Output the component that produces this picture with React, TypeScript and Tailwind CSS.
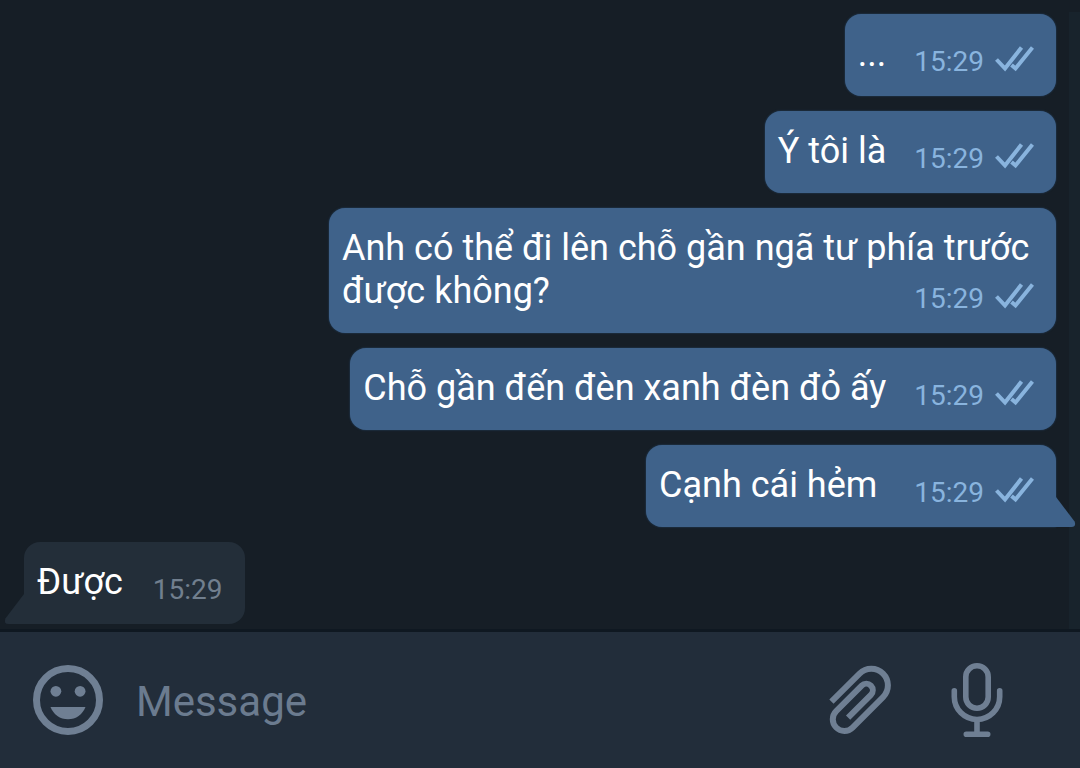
type Message = {
  id: number
  text: string
  time: string
  outgoing: boolean
  tail?: boolean
}

const messages: Message[] = [
  { id: 1, text: "...", time: "15:29", outgoing: true },
  { id: 2, text: "Ý tôi là", time: "15:29", outgoing: true },
  { id: 3, text: "Anh có thể đi lên chỗ gần ngã tư phía trước được không?", time: "15:29", outgoing: true },
  { id: 4, text: "Chỗ gần đến đèn xanh đèn đỏ ấy", time: "15:29", outgoing: true },
  { id: 5, text: "Cạnh cái hẻm\u00a0", time: "15:29", outgoing: true, tail: true },
  { id: 6, text: "Được", time: "15:29", outgoing: false, tail: true },
]

function ReadMark() {
  return (
    <svg className="mt-px h-[26px] w-[39px]" viewBox="0 0 39 26" fill="none" stroke="currentColor" strokeWidth="4" role="img" aria-label="Read">
      <path d="M1.5 13.5 10 22.5 26.5 1.5" />
      <path d="M16.5 19 20.5 22.5 37.5 1.5" />
    </svg>
  )
}

function Tail({ outgoing }: { outgoing: boolean }) {
  return (
    <svg
      className={`absolute bottom-0 h-[30px] w-5 ${outgoing ? "left-full text-[#3f628a]" : "right-full -scale-x-100 text-[#232e39]"}`}
      viewBox="0 0 20 30"
      fill="currentColor"
      overflow="visible"
      aria-hidden="true"
    >
      <path d="M-1 0H0L18.6 24.5Q20.5 30 15.5 30H-1Z" />
    </svg>
  )
}

function Bubble({ message }: { message: Message }) {
  const { text, time, outgoing, tail } = message

  return (
    <li
      className={`relative flow-root max-w-[727px] rounded-2xl pb-[17px] pl-[13px] pr-[22px] pt-[19px] ${
        outgoing
          ? "self-end bg-[#3f628a] shadow-[0_0_2px_#27486b]"
          : "self-start bg-[#232e39]"
      } ${tail ? (outgoing ? "rounded-br-none" : "rounded-bl-none") : ""}`}
    >
      <span className="text-[36px] leading-[43px] text-white">{text}</span>
      {/* Floats onto the last line of the text when there is room */}
      <span
        className={`float-right mt-3 flex items-start gap-[11px] text-[28px] leading-[34px] ${
          outgoing ? "ml-7 text-[#89b4de]" : "ml-[30px] text-[#717f8e]"
        }`}
      >
        <time>{time}</time>
        {outgoing && <ReadMark />}
      </span>
      {tail && <Tail outgoing={outgoing} />}
    </li>
  )
}

function SmileIcon() {
  return (
    <svg className="size-[70px]" viewBox="0 0 70 70" fill="currentColor" aria-hidden="true">
      <circle cx="35" cy="35" r="31.5" fill="none" stroke="currentColor" strokeWidth="7" />
      <circle cx="22.9" cy="26.3" r="5.4" />
      <circle cx="47.1" cy="26.3" r="5.4" />
      <path d="M17.5 42H52.5C49.5 49.5 43 54.3 35 54.3S20.5 49.5 17.5 42Z" />
    </svg>
  )
}

function ClipIcon() {
  return (
    <svg className="h-[70px] w-16" viewBox="0 0 64 70" fill="none" stroke="currentColor" strokeWidth="6" aria-hidden="true">
      <path
        transform="translate(31 35) rotate(-45)"
        d="M-21.4-19H18.4A16.6 16.6 0 0 1 18.4 14.2H-24.7A11.6 11.6 0 0 1-24.7-9H11.4A6.5 6.5 0 0 1 11.4 4H-20.8"
      />
    </svg>
  )
}

function MicIcon() {
  return (
    <svg className="h-[76px] w-[52px]" viewBox="0 0 52 76" fill="none" stroke="currentColor" strokeWidth="5.6" strokeLinecap="round" aria-hidden="true">
      <rect x="14.8" y="3.8" width="22.4" height="42.4" rx="11.2" />
      <path d="M3.3 28.7V34.8A22.7 22.7 0 0 0 48.7 34.8V28.7M26 58V71M15.3 72.2H36.7" />
    </svg>
  )
}

export default function App() {
  return (
    <div className="flex min-h-screen flex-col overflow-hidden bg-[#161e26] font-[Roboto,sans-serif]">
      <main className="flex flex-1">
        <ol className="z-10 flex flex-1 flex-col gap-[15px] pb-1 pl-6 pr-[13px] pt-3.5">
          {messages.map((message) => (
            <Bubble key={message.id} message={message} />
          ))}
        </ol>
        {/* Scroll track */}
        <div className="mt-3 w-[11px] bg-[#18232c]" />
      </main>

      <form
        className="flex items-center border-t-[3px] border-[#0f1821] bg-[#222d3a] py-[30px] pl-[33px] pr-[77px] text-[#6f7f93]"
        onSubmit={(e) => e.preventDefault()}
      >
        <button type="button" aria-label="Emoji">
          <SmileIcon />
        </button>
        <input
          type="text"
          aria-label="Message"
          placeholder="Message"
          className="ml-[33px] min-w-0 flex-1 bg-transparent pt-1 text-[42px] leading-[50px] text-white outline-none placeholder:text-[#6b7b8f]"
        />
        <button type="button" aria-label="Attach file">
          <ClipIcon />
        </button>
        <button type="button" aria-label="Record voice message" className="ml-[58px]">
          <MicIcon />
        </button>
      </form>
    </div>
  )
}
